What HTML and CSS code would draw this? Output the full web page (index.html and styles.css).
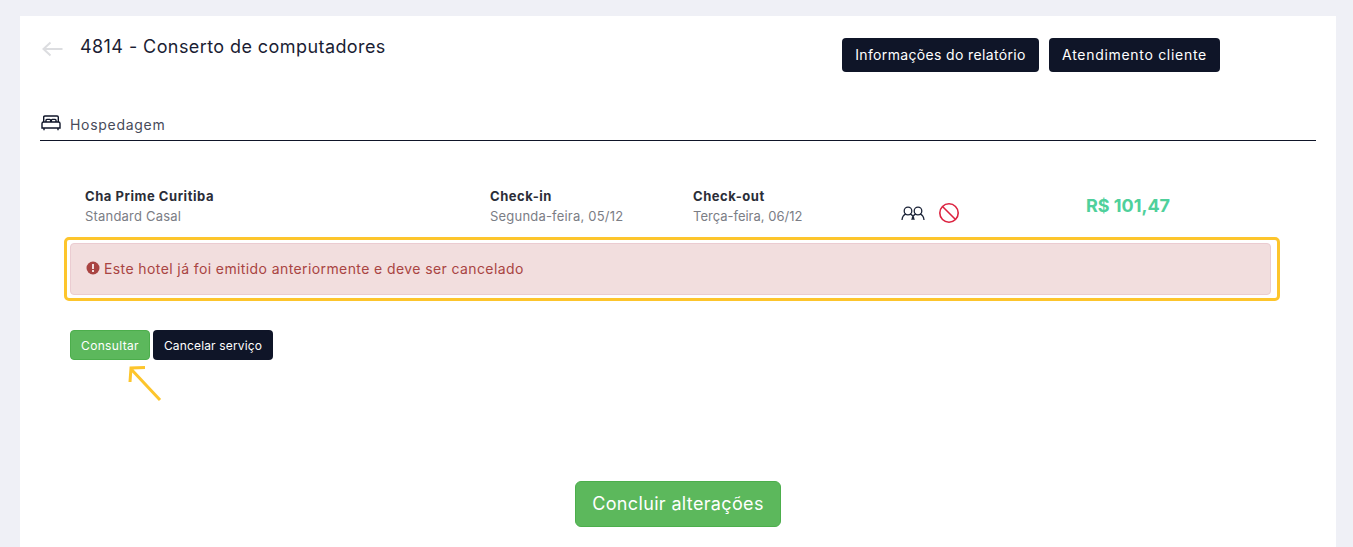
FILE: index.html

```html
<!DOCTYPE html>
<html lang="pt-BR">
<head>
  <meta charset="UTF-8" />
  <meta name="viewport" content="width=device-width, initial-scale=1.0" />
  <title>4814 - Conserto de computadores</title>
  <link rel="stylesheet" href="styles.css">
</head>
<body>
  <div class="card">
    <header class="top">
      <div class="top-title">
        <svg class="back" width="22" height="16" viewBox="0 0 22 16" fill="none" stroke="#dcdde0" stroke-width="2">
          <path d="M21.500 8H2.500M9.500 1.500L2.500 8l7 6.500"/>
        </svg>
        <h1>4814 - Conserto de computadores</h1>
      </div>
      <div class="top-actions">
        <button class="btn btn-dark btn-top btn-info">Informações do relatório</button>
        <button class="btn btn-dark btn-top btn-client">Atendimento cliente</button>
      </div>
    </header>

    <div class="section">
      <svg width="20" height="16" viewBox="0 0 20 16" fill="none" stroke="#0f1528" stroke-width="1.4">
        <path d="M2.700 7V2.200Q2.700 1 3.900 1H16.100Q17.300 1 17.300 2.200V7"/>
        <path d="M5 7V5.200Q5 4.400 5.800 4.400H8.800Q9.600 4.400 9.600 5.200V7M10.400 7V5.200Q10.400 4.400 11.200 4.400H14.200Q15 4.400 15 5.200V7"/>
        <path d="M1 13V8.600Q1 7 2.600 7H17.400Q19 7 19 8.600V13H1ZM3 13v2.200M17 13v2.200"/>
      </svg>
      <span>Hospedagem</span>
    </div>

    <div class="hotel">
      <div>
        <div class="label">Cha Prime Curitiba</div>
        <div class="sub">Standard Casal</div>
      </div>
      <div>
        <div class="label">Check-in</div>
        <div class="sub">Segunda-feira, 05/12</div>
      </div>
      <div>
        <div class="label">Check-out</div>
        <div class="sub sub-out">Terça-feira, 06/12</div>
      </div>
      <div class="hotel-icons">
        <svg width="24" height="15" viewBox="0 0 24 15" fill="none" stroke="#1c2438" stroke-width="1.3">
          <circle cx="7" cy="5" r="3.800"/>
          <circle cx="17" cy="5" r="3.800"/>
          <path d="M1 14c.3-3 2-5.200 3.800-5.800M13 14c-.3-3-2-5.200-3.800-5.800M11 14c.3-3 2-5.200 3.800-5.800M23 14c-.3-3-2-5.200-3.800-5.800"/>
        </svg>
        <svg width="22" height="22" viewBox="0 0 22 22" fill="none" stroke="#dc2340" stroke-width="1.600">
          <circle cx="11" cy="11" r="9.200"/>
          <path d="M4.500 4.500l13 13"/>
        </svg>
      </div>
      <div class="price">R$ 101,47</div>
    </div>

    <div class="alert-wrap">
      <div class="alert">
        <svg width="14" height="14" viewBox="0 0 14 14">
          <circle cx="7" cy="7" r="6.500" fill="#a94442"/>
          <rect x="6" y="3" width="2" height="5" fill="#f2dede"/>
          <rect x="6" y="9" width="2" height="2" fill="#f2dede"/>
        </svg>
        <span>Este hotel já foi emitido anteriormente e deve ser cancelado</span>
      </div>
      <div class="mark-box"></div>
    </div>

    <div class="row-actions">
      <button class="btn btn-green btn-small btn-consult">Consultar</button>
      <button class="btn btn-dark btn-small btn-cancel">Cancelar serviço</button>
      <svg class="mark-arrow" width="36" height="38" viewBox="0 0 36 38" fill="none" stroke="#fdc52c" stroke-width="3">
        <path d="M33 36L4 5M3 18L4 4l14-.5"/>
      </svg>
    </div>

    <div class="finish">
      <button class="btn btn-green btn-finish">Concluir alterações</button>
    </div>
  </div>
</body>
</html>
```

FILE: styles.css

```css
* { box-sizing: border-box; }
html, body { height: 547px; overflow: hidden; }
body { margin: 0; padding: 16px 17px 0 20px; background: #eff0f6; font-family: Inter, "Open Sans", sans-serif; color: #0f1528; }

.card { height: 531px; background: #fff; padding: 0 20px; overflow: hidden; }

.top { display: flex; align-items: flex-start; height: 99px; }
.top-title { display: flex; align-items: center; width: 802px; padding-top: 20px; padding-left: 1px; }
.top-title .back { margin-top: 4px; margin-right: 17px; }
h1 { margin: 0; font-size: 18px; font-weight: 400; letter-spacing: 0.42px; line-height: 22px; color: #1a1d33; }
.top-actions { display: flex; gap: 10px; padding-top: 22px; }

.btn { border: 1px solid transparent; border-radius: 4px; font-family: Inter, "Open Sans", sans-serif; color: #fff; padding: 0; }
.btn-dark { background: #0f1528; }
.btn-green { background: #5cb85c; border-color: #4cae4c; }
.btn-top { height: 34px; padding-bottom: 2px; font-size: 14px; letter-spacing: 0.35px; }
.btn-info { width: 197px; }
.btn-client { width: 171px; letter-spacing: 0.7px; }
.btn-small { height: 30px; font-size: 12px; letter-spacing: 0.15px; }
.btn-consult { width: 80px; letter-spacing: 0.35px; }
.btn-cancel { width: 120px; }
.btn-finish { width: 206px; height: 46px; padding-bottom: 2px; font-size: 18px; letter-spacing: 0.35px; border-radius: 6px; }

.section { display: flex; align-items: center; gap: 9px; height: 26px; border-bottom: 1px solid #0f1528; padding-left: 1px; padding-bottom: 6px; font-size: 14px; color: #474b5a; letter-spacing: 0.7px; }
.section svg { margin-top: -4px; }

.hotel { display: grid; grid-template-columns: 405px 203px 208px 128px 198px; margin-top: 45px; padding-left: 45px; height: 57px; }
.label { font-size: 13px; font-weight: 700; line-height: 20px; color: #2b2d38; letter-spacing: 0.55px; }
.sub { font-size: 13px; line-height: 20px; color: #7b7d85; letter-spacing: 0.2px; }
.sub-out { letter-spacing: 0; }
.hotel-icons { display: flex; align-items: center; gap: 13px; height: 40px; padding-top: 14px; }
.price { font-size: 18px; font-weight: 700; line-height: 20px; color: #4fd09b; text-align: center; padding-top: 10px; }

.alert-wrap { position: relative; margin: 0 45px 0 30px; }
.alert { display: flex; align-items: center; gap: 4px; height: 52px; padding: 0 15px 2px; background: #f2dede; border: 1px solid #ebccd1; border-radius: 4px; color: #a94442; font-size: 14px; letter-spacing: 0.4px; }
.mark-box { position: absolute; top: -6px; left: -6px; width: 1216px; height: 64px; border: 3px solid #fdc52c; border-radius: 5px; }

.row-actions { position: relative; display: flex; gap: 3px; margin: 35px 0 0 30px; }
.mark-arrow { position: absolute; top: 34px; left: 57px; }

.finish { display: flex; justify-content: center; margin-top: 121px; }
```
